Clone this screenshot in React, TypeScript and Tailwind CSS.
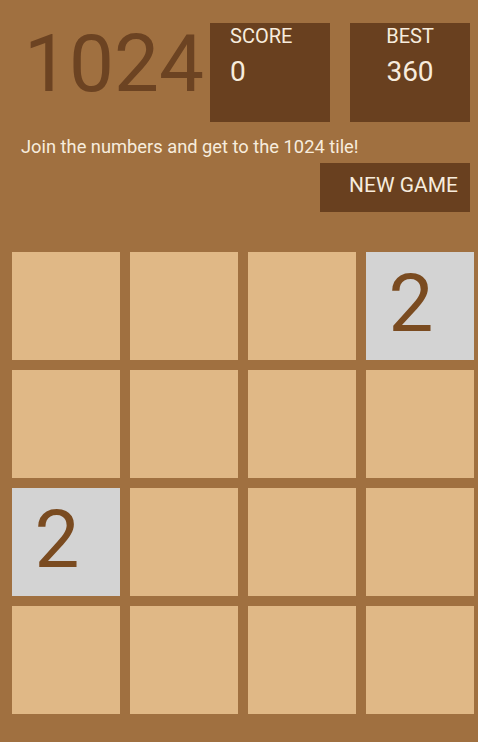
import React from "react";

const grid: (number | null)[][] = [
  [null, null, null, 2],
  [null, null, null, null],
  [2, null, null, null],
  [null, null, null, null],
];

export default function App() {
  return (
    <div
      className="w-[478px] h-[742px] bg-[#A07040] flex flex-col overflow-hidden"
      style={{ fontFamily: "Roboto, 'Noto Sans', sans-serif" }}
    >
      <div className="flex pt-[23px]">
        <div className="w-[210px] pl-[24px] pt-[1px] text-[80px] leading-none text-[#6C4322]">1024</div>
        <div className="w-[120px] h-[99px] bg-[#69401F] pt-[3px] pl-[20px] text-[#F7ECDD]">
          <div className="text-[20px] leading-none">SCORE</div>
          <div className="mt-[12px] text-[28px] leading-none">0</div>
        </div>
        <div className="ml-[20px] w-[120px] h-[99px] bg-[#69401F] pt-[3px] flex flex-col items-center text-[#F7ECDD]">
          <div className="text-[20px] leading-none">BEST</div>
          <div className="mt-[12px] text-[28px] leading-none">360</div>
        </div>
      </div>
      <div className="mt-[16px] pl-[21px] text-[18.3px] leading-none text-[#F7ECDD]">
        Join the numbers and get to the 1024 tile!
      </div>
      <div className="mt-[7px] flex justify-end pr-[8px]">
        <div className="w-[150px] h-[49px] bg-[#69401F] flex justify-end pt-[12px] pr-[12px] text-[21px] leading-none text-[#F7ECDD]">
          NEW GAME
        </div>
      </div>
      <div className="mt-[40px] pl-[12px] grid grid-cols-[repeat(4,108px)] grid-rows-[repeat(4,108px)] gap-[10px]">
        {grid.flat().map((v, i) => (
          <div
            key={i}
            className={
              v
                ? "bg-[#D3D3D3] flex items-center justify-center pr-[18px] pb-[4px] text-[80px] leading-none text-[#7A4B20]"
                : "bg-[#E0B886]"
            }
          >
            {v ?? ""}
          </div>
        ))}
      </div>
    </div>
  );
}
